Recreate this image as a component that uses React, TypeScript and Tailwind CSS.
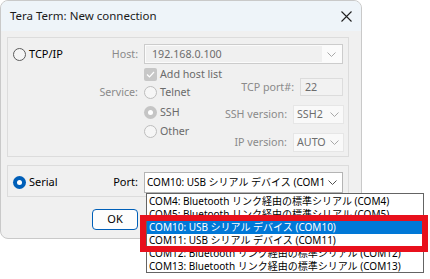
import React from "react";

const Chevron = ({ color }: { color: string }) => (
  <svg width="9" height="5" viewBox="0 0 9 5" fill="none">
    <path d="M0.5 0.5 L4.5 4.5 L8.5 0.5" stroke={color} strokeWidth="1" />
  </svg>
);

const Radio = ({ kind }: { kind: "off" | "offDisabled" | "onDisabled" | "on" }) => {
  if (kind === "on")
    return (
      <div className="w-[13px] h-[13px] rounded-full bg-[#005fb8] flex items-center justify-center">
        <div className="w-[5px] h-[5px] rounded-full bg-white" />
      </div>
    );
  if (kind === "onDisabled")
    return (
      <div className="w-[13px] h-[13px] rounded-full bg-[#c5c5c5] flex items-center justify-center">
        <div className="w-[5px] h-[5px] rounded-full bg-white" />
      </div>
    );
  if (kind === "offDisabled")
    return <div className="w-[13px] h-[13px] rounded-full border border-[#bdbdbd] bg-[#f6f6f6]" />;
  return <div className="w-[13px] h-[13px] rounded-full border border-[#5c5c5c] bg-[#f5f5f5]" />;
};

const items = [
  { t: "COM4: Bluetooth リンク経由の標準シリアル (COM4)", sel: false },
  { t: "COM5: Bluetooth リンク経由の標準シリアル (COM5)", sel: false },
  { t: "COM10: USB シリアル デバイス (COM10)", sel: true },
  { t: "COM11: USB シリアル デバイス (COM11)", sel: false },
  { t: "COM12: Bluetooth リンク経由の標準シリアル (COM12)", sel: false },
  { t: "COM13: Bluetooth リンク経由の標準シリアル (COM13)", sel: false },
];

export default function App() {
  return (
    <div className="relative w-[430px] h-[279px] bg-white overflow-hidden font-['Noto_Sans','Noto_Sans_CJK_JP',sans-serif] text-[10.7px] text-black">
      {/* Window */}
      <div className="w-[362px] h-[239px] rounded-[8px] border border-[#c9c9c9] bg-[#f0f0f0] flex flex-col overflow-hidden">
        {/* Title bar */}
        <div className="h-[30px] bg-[#eef4f9] flex items-center justify-between pl-[9px] pr-[9px] shrink-0">
          <span className="text-[11.5px] text-[#1a1a1a]">Tera Term: New connection</span>
          <svg width="11" height="11" viewBox="0 0 11 11">
            <path d="M0.5 0.5 L10.5 10.5 M10.5 0.5 L0.5 10.5" stroke="#202020" strokeWidth="1.1" />
          </svg>
        </div>
        {/* Body */}
        <div className="flex flex-col pl-[6px] pt-[6px]">
          {/* TCP/IP group */}
          <div className="w-[342px] h-[120px] border border-[#dcdcdc] flex flex-col">
            <div className="mt-[6px] h-[20px] flex">
              <div className="w-[136px] flex items-center">
                <div className="ml-[5px]"><Radio kind="off" /></div>
                <span className="ml-[3px] text-[11px]">TCP/IP</span>
                <span className="ml-auto mr-[6px] text-[#8a8a8a]">Host:</span>
              </div>
              <div className="flex h-[20px] w-[199px] border border-[#cccccc] bg-[#fbfbfb] p-[1px]">
                <div className="flex-1 bg-[#f0f0f0] flex items-center pl-[6px] text-[#6d6d6d]">192.168.0.100</div>
                <div className="w-[19px] flex items-center justify-center"><Chevron color="#a8a8a8" /></div>
              </div>
            </div>
            <div className="mt-[4px] flex">
              <div className="w-[136px] flex flex-col items-end pr-[6px] pt-[18px]">
                <span className="h-[13px] leading-[13px] text-[#8a8a8a]">Service:</span>
              </div>
              <div className="flex flex-col">
                <div className="h-[13px] flex items-center">
                  <div className="w-[13px] h-[13px] rounded-[2px] bg-[#c7c7c7] flex items-center justify-center">
                    <svg width="9" height="7" viewBox="0 0 9 7">
                      <path d="M1 3.5 L3.5 6 L8 1" stroke="white" strokeWidth="1.2" fill="none" />
                    </svg>
                  </div>
                  <span className="ml-[3px] text-[#6a6a6a] whitespace-nowrap">Add host list</span>
                </div>
                <div className="mt-[5px] h-[13px] flex items-center">
                  <Radio kind="offDisabled" />
                  <span className="ml-[3px] text-[#6a6a6a]">Telnet</span>
                </div>
                <div className="mt-[7px] h-[13px] flex items-center">
                  <Radio kind="onDisabled" />
                  <span className="ml-[3px] text-[#6a6a6a]">SSH</span>
                </div>
                <div className="mt-[6px] h-[13px] flex items-center">
                  <Radio kind="offDisabled" />
                  <span className="ml-[3px] text-[#6a6a6a]">Other</span>
                </div>
              </div>
              <div className="flex-1 flex flex-col items-end pr-[4px] pt-[10px]">
                <div className="h-[18px] flex items-center">
                  <span className="mr-[6px] text-[#8a8a8a] whitespace-nowrap">TCP port#:</span>
                  <div className="w-[43px] h-[18px] border border-[#dcdcdc] bg-[#f2f2f2] flex items-center pl-[4px] text-[#6d6d6d] mr-[1px]">22</div>
                </div>
                <div className="mt-[9px] h-[19px] flex items-center">
                  <span className="mr-[6px] text-[#8a8a8a] whitespace-nowrap">SSH version:</span>
                  <div className="w-[51px] h-[19px] border border-[#e6e6e6] bg-[#f9f9f9] flex items-center justify-between pl-[3px] pr-[4px] text-[#6d6d6d]">
                    <span>SSH2</span>
                    <Chevron color="#a8a8a8" />
                  </div>
                </div>
                <div className="mt-[9px] h-[19px] flex items-center">
                  <span className="mr-[6px] text-[#8a8a8a] whitespace-nowrap">IP version:</span>
                  <div className="w-[51px] h-[19px] border border-[#e6e6e6] bg-[#f9f9f9] flex items-center justify-between pl-[3px] pr-[4px] text-[#6d6d6d]">
                    <span>AUTO</span>
                    <Chevron color="#a8a8a8" />
                  </div>
                </div>
              </div>
            </div>
          </div>
          {/* Serial group */}
          <div className="mt-[8px] w-[342px] h-[32px] border border-[#dcdcdc] flex">
            <div className="mt-[6px] h-[21px] flex">
              <div className="w-[136px] flex items-center">
                <div className="ml-[5px]"><Radio kind="on" /></div>
                <span className="ml-[3px] text-[11px]">Serial</span>
                <span className="ml-auto mr-[6px] text-[11px]">Port:</span>
              </div>
              <div className="flex h-[21px] w-[199px] border border-[#b4b4b4] bg-white items-center justify-between pl-[2px] pr-[5px]">
                <span className="whitespace-nowrap text-[10px]">COM10: USB シリアル デバイス (COM1</span>
                <Chevron color="#505050" />
              </div>
            </div>
          </div>
          {/* Buttons */}
          <div className="mt-[12px] pl-[85px] flex">
            <div className="w-[46px] h-[21px] rounded-[4px] border border-[#005fb8] bg-[#fdfdfd] flex items-center justify-center text-[11px]">
              OK
            </div>
          </div>
        </div>
      </div>

      {/* Dropdown list */}
      <div className="absolute left-[146px] top-[193px] w-[278px] h-[80px] border border-[#646464] bg-white pt-[1px] flex flex-col text-[10px]">
        {items.map((it) => (
          <div
            key={it.t}
            className={
              it.sel
                ? "h-[13px] leading-[13px] pl-[2px] whitespace-nowrap bg-[#0078d7] text-white"
                : "h-[13px] leading-[13px] pl-[2px] whitespace-nowrap text-black"
            }
          >
            {it.t}
          </div>
        ))}
      </div>

      {/* Red highlight frame */}
      <div className="absolute left-[140px] top-[215px] w-[288px] h-[37px] border-[6px] border-[#e8101c]" />
    </div>
  );
}
